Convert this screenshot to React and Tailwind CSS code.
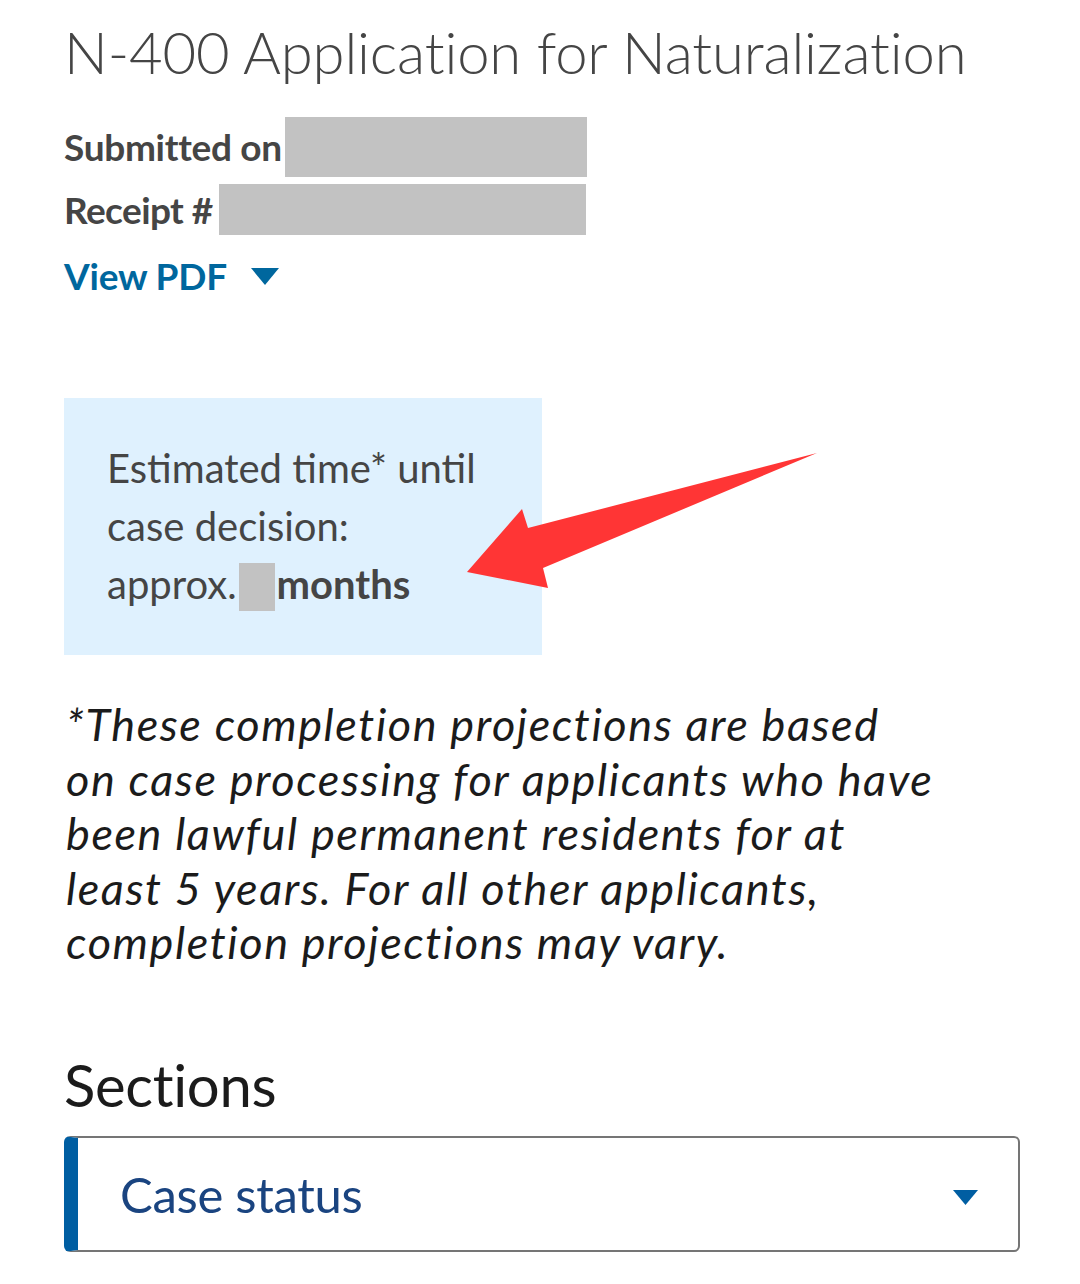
import React from 'react';

const sans = { fontFamily: 'Lato, "Noto Sans", sans-serif' };

function Redacted({ className }) {
  return <span className={`inline-block bg-[#c2c2c2] align-middle ${className}`} />;
}

function Caret({ className }) {
  return (
    <svg viewBox="0 0 10 6" className={className} aria-hidden="true">
      <path d="M0 0h10L5 6z" fill="currentColor" />
    </svg>
  );
}

export default function App() {
  return (
    <div className="relative min-h-screen bg-white px-[64px] pt-[16px] text-[#454545]" style={sans}>
      {/* Header */}
      <h1 className="whitespace-nowrap text-[58px] font-light leading-[72px] tracking-[-0.15px] text-[#454545]">
        N-400 Application for Naturalization
      </h1>

      <div className="mt-[29px] flex flex-col gap-[7px]">
        <div className="flex items-center">
          <span className="text-[37px] font-bold leading-[40px] tracking-[-0.3px]">Submitted on</span>
          <Redacted className="ml-[3px] h-[60px] w-[302px]" />
        </div>
        <div className="flex items-center">
          <span className="text-[37px] font-bold leading-[40px] tracking-[-0.6px]">Receipt #</span>
          <Redacted className="ml-[6px] h-[51px] w-[367px]" />
        </div>
      </div>

      <button className="mt-[19px] flex items-center gap-[24px] text-[#00679e]">
        <span className="text-[37px] font-bold leading-[44px] tracking-[-0.2px]">View PDF</span>
        <Caret className="h-[17px] w-[28px]" />
      </button>

      {/* Estimate callout */}
      <div className="mt-[100px] w-[478px] bg-[#dff1fe] px-[43px] pb-[42px] pt-[41px]">
        <p className="whitespace-nowrap text-[40px] leading-[58px] text-[#454545]">
          Estimated time* until
          <br />
          case decision:
          <br />
          approx.
          <Redacted className="mx-[2px] h-[48px] w-[36px] -translate-y-[2px]" />
          <span className="font-bold">months</span>
        </p>
      </div>

      <p className="mt-[42px] whitespace-nowrap pl-[2px] text-[45px] italic leading-[54.5px] tracking-[1.6px] text-[#1b1b1b]">
        *These completion projections are based
        <br />
        on case processing for applicants who have
        <br />
        been lawful permanent residents for at
        <br />
        least 5 years. For all other applicants,
        <br />
        completion projections may vary.
      </p>

      {/* Sections */}
      <h2 className="mt-[85px] text-[58px] leading-[60px] tracking-[-0.3px] text-[#1b1b1b]">Sections</h2>

      <div className="mt-[21px] flex h-[116px] w-[956px] items-center justify-between rounded-[6px] border-2 border-l-[14px] border-[#757575] border-l-[#005ea2] pl-[42px] pr-[40px]">
        <span className="text-[49px] leading-[56px] tracking-[-0.3px] text-[#1a4480]">Case status</span>
        <Caret className="h-[15px] w-[25px] translate-y-[4px] text-[#005ea2]" />
      </div>

      {/* annotation arrow drawn over the page */}
      <svg
        className="pointer-events-none absolute left-0 top-0"
        width="1080"
        height="1284"
        viewBox="0 0 1080 1284"
        aria-hidden="true"
      >
        <polygon
          points="467,572 522,509 528,528 817,453 543,568 548,588"
          fill="#ff3131"
          fillOpacity="0.98"
        />
      </svg>
    </div>
  );
}
